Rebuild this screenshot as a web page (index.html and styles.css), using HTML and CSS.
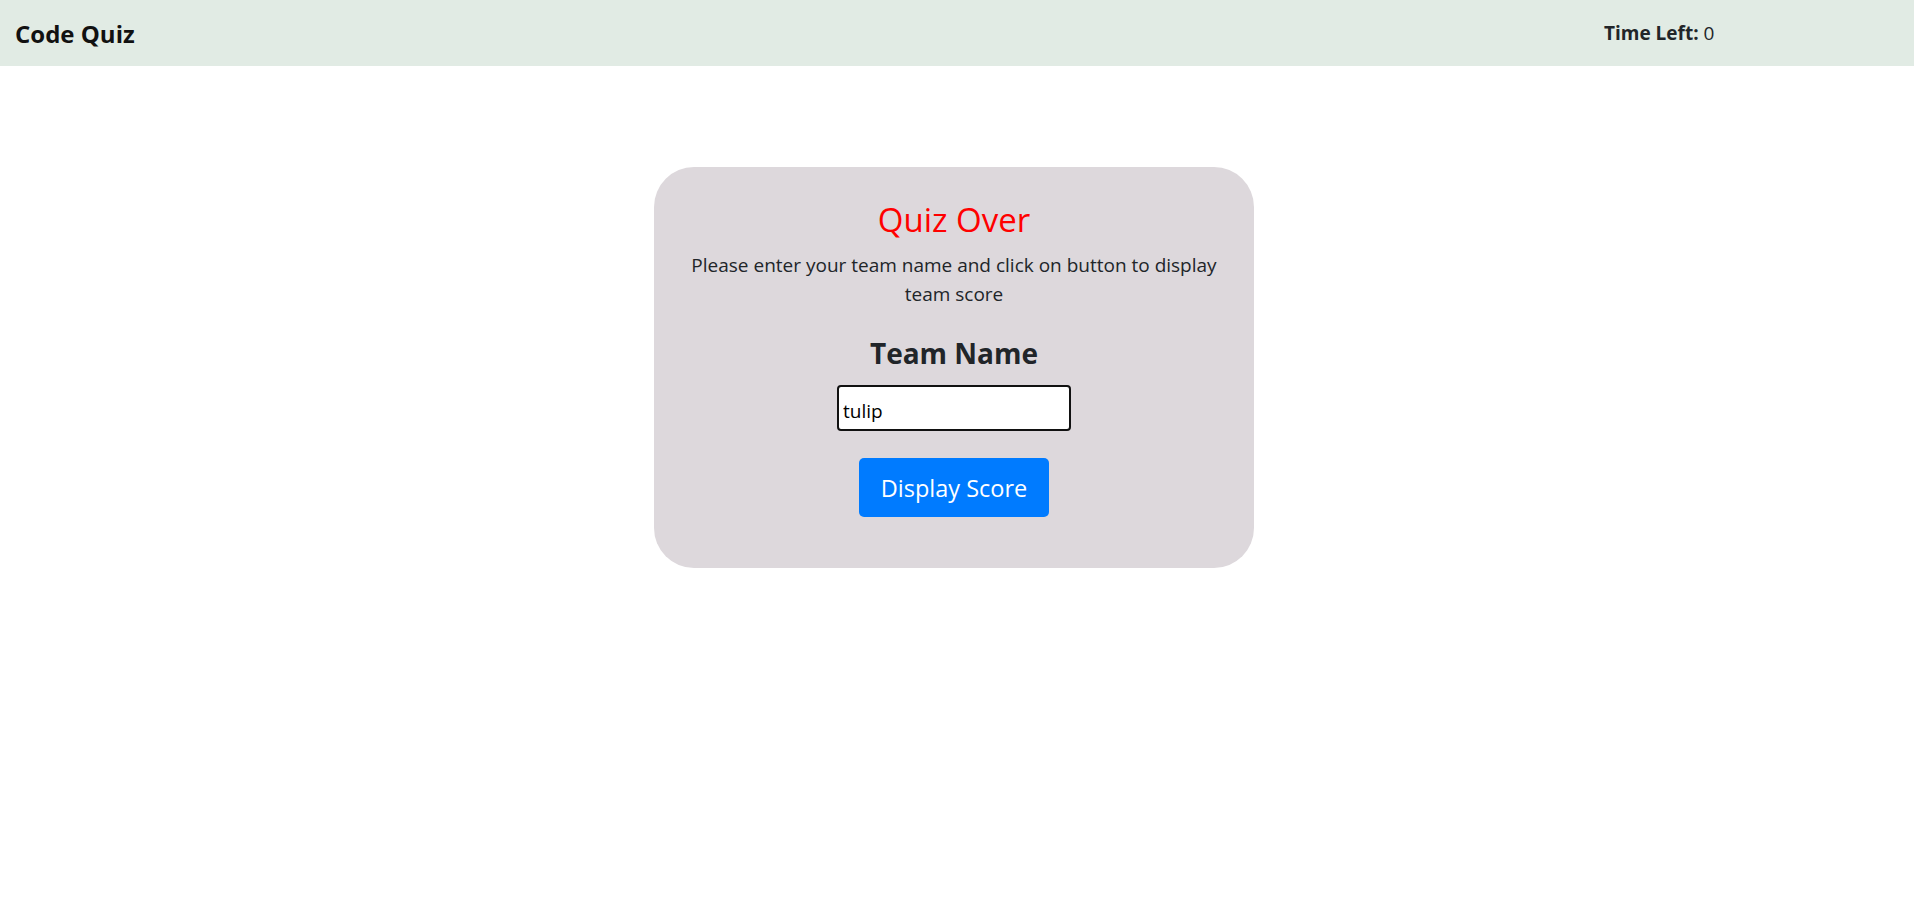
FILE: index.html
```html
<!DOCTYPE html>
<html lang="en">
<head>
<meta charset="utf-8">
<title>Code Quiz</title>
<link rel="stylesheet" href="styles.css">
</head>
<body>
<header class="topbar">
  <div class="brand">Code Quiz</div>
  <div class="timer"><strong>Time Left:</strong> 0</div>
</header>
<main class="main">
  <section class="card">
    <h1 class="title">Quiz Over</h1>
    <p class="intro">Please enter your team name and click on button to display team score</p>
    <h2 class="label">Team Name</h2>
    <input class="team-input" type="text" value="tulip">
    <button class="btn" type="button">Display Score</button>
  </section>
</main>
</body>
</html>
```
FILE: styles.css
```css
* { box-sizing: border-box; }
html, body { margin: 0; padding: 0; }
body {
  font-family: "Open Sans", "Noto Sans", sans-serif;
  color: #212529;
  background: #ffffff;
}
.topbar {
  height: 66px;
  background: #e1ebe4;
  display: flex;
  align-items: center;
  padding: 0 15px;
}
.brand {
  font-size: 24px;
  font-weight: 700;
  color: #111;
  flex: 1;
}
.timer {
  font-size: 19px;
  width: 295px;
  color: #212529;
}
.timer strong { font-weight: 700; }
.main {
  display: flex;
  justify-content: center;
  padding-top: 101px;
  padding-right: 6px;
}
.card {
  width: 600px;
  height: 401px;
  background: #ddd8dc;
  border-radius: 40px;
  padding: 33px 36px 0;
  display: flex;
  flex-direction: column;
  align-items: center;
  text-align: center;
}
.title {
  margin: 0;
  font-size: 33px;
  font-weight: 400;
  line-height: 40px;
  color: #ff0000;
}
.intro {
  margin: 11px 0 0;
  font-size: 19px;
  line-height: 29px;
  color: #212529;
}
.label {
  margin: 27px 0 0;
  font-size: 28px;
  font-weight: 700;
  line-height: 35px;
}
.team-input {
  margin-top: 14px;
  width: 234px;
  height: 46px;
  border: 2px solid #111;
  border-radius: 4px;
  padding: 5px 4px 0;
  font-family: inherit;
  font-size: 19px;
  color: #000;
  background: #fff;
}
.btn {
  margin-top: 27px;
  width: 190px;
  height: 59px;
  border: none;
  border-radius: 5px;
  background: #007bff;
  color: #fff;
  font-family: inherit;
  font-size: 23.5px;
  cursor: pointer;
}
```
